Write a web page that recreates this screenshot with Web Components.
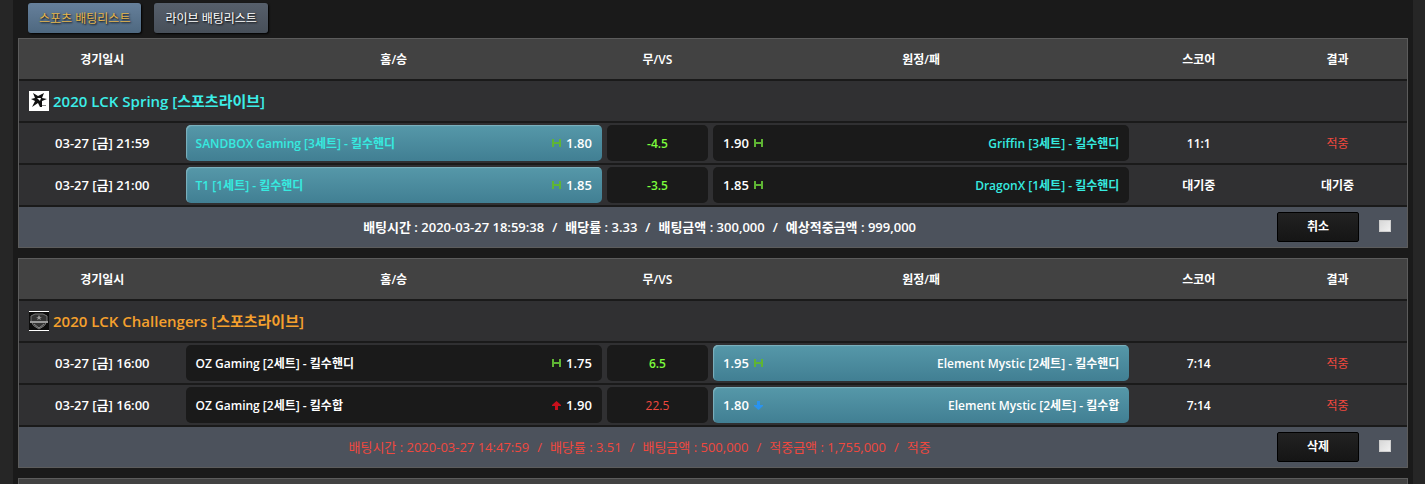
<!DOCTYPE html>
<html lang="ko">
<head>
<meta charset="utf-8">
<title>배팅리스트</title>
<style>
html {
    height: 100%;
    overflow: hidden;
    background: #262626;
}
body {
    height: 100%;
    overflow: hidden;
    margin: 0 12px 0 13px;
    background: #1a1a1a;
    color: #fff;
    font: 12px/20px "Open Sans", "Noto Sans CJK KR", sans-serif;
}
</style>
</head>
<body>

<template id="bet-tabs-template">
    <style>
    :host {
        display: flex;
        gap: 13px;
        padding: 3px 15px 5px;
    }
    </style>
    <slot></slot>
</template>

<template id="bet-tab-template">
    <style>
    :host {
        display: block;
    }
    button {
        display: block;
        height: 30px;
        padding: 1px 11px 0;
        border: 0;
        border-radius: 3px;
        background: linear-gradient(#565f6b, #474f59);
        box-shadow: 1px 1px 2px #000;
        color: #fff;
        font: inherit;
        text-shadow: 1px 1px 2px #000;
        white-space: nowrap;
        cursor: pointer;
    }
    :host([active]) button {
        background: linear-gradient(#66809b, #4e6880);
        color: #e6b64c;
    }
    </style>
    <button type="button"><slot></slot></button>
</template>

<template id="odds-icon-template">
    <style>
    :host {
        display: block;
        flex: none;
        width: 9px;
        height: 9px;
    }
    svg {
        display: block;
    }
    </style>
    <svg width="9" height="9" viewBox="0 0 9 9" aria-hidden="true"><path></path></svg>
</template>

<template id="bet-pick-template">
    <style>
    :host {
        display: flex;
        align-items: center;
        justify-content: space-between;
        box-sizing: border-box;
        height: 36px;
        padding: 0 10px;
        border-radius: 5px;
        background: #1a1a1a;
        font-weight: 600;
        white-space: nowrap;
    }
    :host([side="away"]) {
        flex-direction: row-reverse;
    }
    :host([side="away"]) .odds {
        flex-direction: row-reverse;
    }
    :host([side="line"]) {
        justify-content: center;
        margin: 0 5px;
        color: #7cfc3c;
    }
    :host([side="line"][tone="red"]) {
        color: #f0483e;
        font-weight: 400;
    }
    :host([tone="cyan"]) .team {
        color: #36ebe0;
    }
    :host([picked]) {
        background: linear-gradient(#5698a9, #417f93);
        box-shadow: inset 1px 1px 1px #7fb2be;
    }
    .team {
        padding-top: 1px;
    }
    .odds {
        display: flex;
        align-items: center;
        gap: 5px;
    }
    .odds span {
        font-size: 13px;
    }
    .odds:empty {
        display: none;
    }
    </style>
    <span class="team"><slot></slot></span>
    <span class="odds"></span>
</template>

<template id="bet-total-template">
    <style>
    :host {
        display: flex;
        justify-content: center;
        gap: 8px;
        font-size: 13px;
    }
    </style>
    <slot></slot>
</template>

<template id="bet-slip-template">
    <style>
    :host {
        display: block;
        margin: 0 5px 10px;
        border: 1px solid #5c5c5c;
        background: #303032;
    }
    table {
        width: 100%;
        border-spacing: 0;
        table-layout: fixed;
    }
    th, td {
        box-sizing: border-box;
        height: 42px;
        padding: 0;
        border-bottom: 2px solid #1a1a1a;
        font-weight: 600;
        text-align: center;
        white-space: nowrap;
    }
    thead th {
        background: #424242;
    }
    thead th, .text {
        padding-top: 1px;
    }
    .when {
        font-size: 13px;
    }
    .date { width: 12%; }
    .side { width: 30%; }
    .line { width: 8%; }
    .league {
        padding: 0 10px;
        color: #3ceee8;
        font-size: 15px;
    }
    :host([tone="orange"]) .league {
        color: #f5a02d;
    }
    .league div {
        display: flex;
        align-items: center;
        gap: 4px;
    }
    .hit {
        color: #f0483e;
        font-weight: 400;
    }
    tfoot td {
        height: 40px;
        border: 0;
        background: #4c525c;
    }
    .total {
        padding-right: 8px;
    }
    :host([settled]) .total {
        color: #f0483e;
        font-weight: 400;
    }
    .actions div {
        display: flex;
        align-items: center;
        justify-content: flex-end;
        gap: 20px;
        padding-right: 16px;
    }
    button {
        width: 82px;
        height: 30px;
        padding: 0;
        border: 1px solid #000;
        border-radius: 2px;
        background: linear-gradient(#222, #151515);
        color: #fff;
        font: inherit;
        cursor: pointer;
    }
    input {
        appearance: none;
        width: 12px;
        height: 12px;
        margin: 0 0 2px;
        border: 1px solid #cfcfcf;
        background: linear-gradient(135deg, #d8d8d8, #f0f0f0);
    }
    </style>
    <table>
        <thead>
            <tr>
                <th class="date">경기일시</th>
                <th class="side">홈/승</th>
                <th class="line">무/VS</th>
                <th class="side">원정/패</th>
                <th>스코어</th>
                <th>결과</th>
            </tr>
        </thead>
        <tbody>
            <tr>
                <th class="league" colspan="6"><div><slot name="logo"></slot><slot name="league"></slot></div></th>
            </tr>
        </tbody>
        <tfoot>
            <tr>
                <td class="total" colspan="5"><slot name="total"></slot></td>
                <td class="actions"><div><button type="button"></button><input type="checkbox" aria-label="선택"></div></td>
            </tr>
        </tfoot>
    </table>
</template>

<bet-tabs>
    <bet-tab active>스포츠 배팅리스트</bet-tab>
    <bet-tab>라이브 배팅리스트</bet-tab>
</bet-tabs>

<bet-slip id="spring" action="취소">
    <svg slot="logo" width="20" height="20" viewBox="0 0 20 20" aria-hidden="true">
        <path fill="#fff" d="M0 0h20v20H0z"/>
        <path fill="#111" d="M4 2l5 3 6-3-2 5 5 1-5 2 0 6h-2l-2-4-6 4 3-6-4-2 4-1z"/>
        <path fill="#fff" d="M8 7l4 0-1 3z"/>
        <path fill="#888" d="M13 14h4v1h-4z"/>
    </svg>
    <span slot="league">2020 LCK Spring [스포츠라이브]</span>
    <bet-total slot="total">
        <span>배팅시간 : 2020-03-27 18:59:38</span>
        <span>/</span>
        <span>배당률 : 3.33</span>
        <span>/</span>
        <span>배팅금액 : 300,000</span>
        <span>/</span>
        <span>예상적중금액 : 999,000</span>
    </bet-total>
</bet-slip>

<bet-slip id="challengers" action="삭제" tone="orange" settled>
    <svg slot="logo" width="20" height="20" viewBox="0 0 20 20" aria-hidden="true">
        <path fill="#0c0c0c" d="M0 0h20v20H0z"/>
        <path fill="#fff" d="M0 0h20v1H0zM0 19h20v1H0z"/>
        <path fill="#333" stroke="#777" d="M2 10V5l4-2h8l4 2v5q-1 5-8 8-7-3-8-8z"/>
        <path fill="#999" d="M1 10h18v2H1zM10 4l1 2h2l-2 1 1 2-2-1-2 1 1-2-2-1h2z"/>
        <path fill="none" stroke="#888" d="M5 13l5 4 5-4"/>
    </svg>
    <span slot="league">2020 LCK Challengers [스포츠라이브]</span>
    <bet-total slot="total">
        <span>배팅시간 : 2020-03-27 14:47:59</span>
        <span>/</span>
        <span>배당률 : 3.51</span>
        <span>/</span>
        <span>배팅금액 : 500,000</span>
        <span>/</span>
        <span>적중금액 : 1,755,000</span>
        <span>/</span>
        <span>적중</span>
    </bet-total>
</bet-slip>

<bet-slip></bet-slip>

<script>
const stamp = (host, id) => {
    const root = host.attachShadow({mode: 'open'})
    root.append(document.getElementById(id).content.cloneNode(true))
    return root
}

class BetTabs extends HTMLElement {
    constructor() {
        super()
        stamp(this, 'bet-tabs-template')
    }
}

class BetTab extends HTMLElement {
    constructor() {
        super()
        stamp(this, 'bet-tab-template')
    }
}

class BetTotal extends HTMLElement {
    constructor() {
        super()
        stamp(this, 'bet-total-template')
    }
}

const ICONS = {
    handicap: ['#5fb534', 'M0 0h2v3h5V0h2v8H7V5H2v3H0z'],
    over: ['#c9101c', 'M4.500 0L9 4v1H6v4H3V5H0V4z'],
    under: ['#2a93f0', 'M4.500 9L0 5V4h3V0h3v4h3v1z']
}

class OddsIcon extends HTMLElement {
    connectedCallback() {
        if (this.shadowRoot) return
        const [fill, d] = ICONS[this.getAttribute('kind')]
        const path = stamp(this, 'odds-icon-template').querySelector('path')
        path.setAttribute('fill', fill)
        path.setAttribute('d', d)
    }
}

class BetPick extends HTMLElement {
    connectedCallback() {
        if (this.shadowRoot) return
        const odds = stamp(this, 'bet-pick-template').querySelector('.odds')
        if (!this.hasAttribute('odds')) return
        odds.innerHTML = `<odds-icon kind="${this.getAttribute('kind')}"></odds-icon><span>${this.getAttribute('odds')}</span>`
    }
}

class BetSlip extends HTMLElement {
    constructor() {
        super()
        const root = stamp(this, 'bet-slip-template')
        root.querySelector('button').textContent = this.getAttribute('action')
        // a slip with nothing in it yet is only an empty bar
        if (!this.hasAttribute('action')) {
            root.querySelectorAll('thead th').forEach(th => th.textContent = '')
            root.querySelector('tbody').remove()
            root.querySelector('tfoot').remove()
        }
    }

    set games(list) {
        const body = this.shadowRoot.querySelector('tbody')
        for (const game of list) {
            const tone = game.tone ? `tone="${game.tone}"` : ''
            const row = document.createElement('tr')
            row.innerHTML = `
                <td class="when">${game.date}</td>
                <td><bet-pick side="home" ${tone} kind="${game.kind[0]}" odds="${game.odds[0]}">${game.home}</bet-pick></td>
                <td><bet-pick side="line" ${game.kind[0] === 'over' ? 'tone="red"' : ''}>${game.line}</bet-pick></td>
                <td><bet-pick side="away" ${tone} kind="${game.kind[1]}" odds="${game.odds[1]}">${game.away}</bet-pick></td>
                <td class="text">${game.score}</td>
                <td class="text ${game.result === '적중' ? 'hit' : ''}">${game.result}</td>
            `
            row.querySelector(`[side="${game.pick}"]`).toggleAttribute('picked', true)
            body.append(row)
        }
    }
}

customElements.define('bet-tabs', BetTabs)
customElements.define('bet-tab', BetTab)
customElements.define('bet-total', BetTotal)
customElements.define('odds-icon', OddsIcon)
customElements.define('bet-pick', BetPick)
customElements.define('bet-slip', BetSlip)

document.querySelector('#spring').games = [
    {date: '03-27 [금] 21:59', home: 'SANDBOX Gaming [3세트] - 킬수핸디', away: 'Griffin [3세트] - 킬수핸디', line: '-4.5', odds: ['1.80', '1.90'], kind: ['handicap', 'handicap'], pick: 'home', tone: 'cyan', score: '11:1', result: '적중'},
    {date: '03-27 [금] 21:00', home: 'T1 [1세트] - 킬수핸디', away: 'DragonX [1세트] - 킬수핸디', line: '-3.5', odds: ['1.85', '1.85'], kind: ['handicap', 'handicap'], pick: 'home', tone: 'cyan', score: '대기중', result: '대기중'}
]

document.querySelector('#challengers').games = [
    {date: '03-27 [금] 16:00', home: 'OZ Gaming [2세트] - 킬수핸디', away: 'Element Mystic [2세트] - 킬수핸디', line: '6.5', odds: ['1.75', '1.95'], kind: ['handicap', 'handicap'], pick: 'away', score: '7:14', result: '적중'},
    {date: '03-27 [금] 16:00', home: 'OZ Gaming [2세트] - 킬수합', away: 'Element Mystic [2세트] - 킬수합', line: '22.5', odds: ['1.90', '1.80'], kind: ['over', 'under'], pick: 'away', score: '7:14', result: '적중'}
]
</script>
</body>
</html>
